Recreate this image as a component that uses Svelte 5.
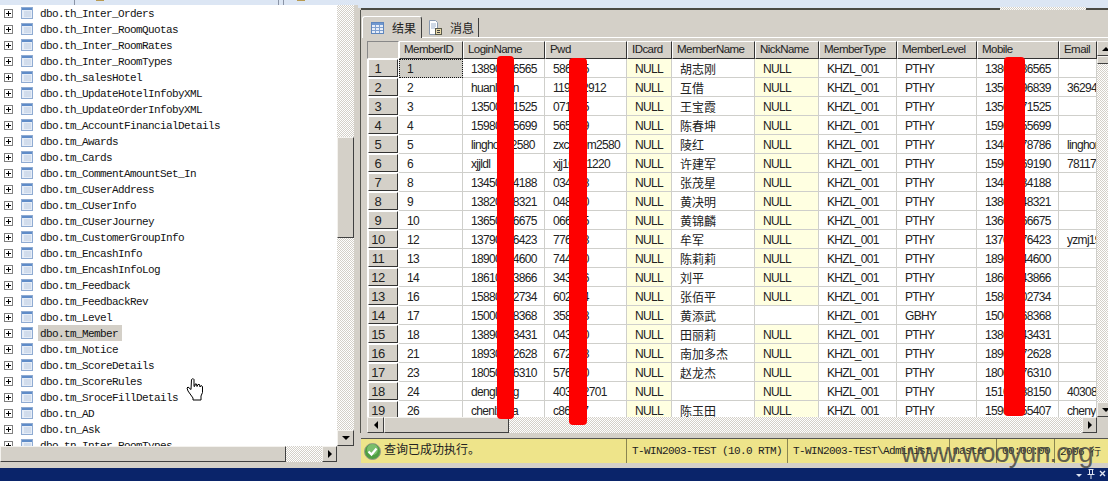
<script>
    const tables = [
        'th_Inter_Orders', 'th_Inter_RoomQuotas', 'th_Inter_RoomRates', 'th_Inter_RoomTypes', 'th_salesHotel',
        'th_UpdateHotelInfobyXML', 'th_UpdateOrderInfobyXML', 'tm_AccountFinancialDetails', 'tm_Awards', 'tm_Cards',
        'tm_CommentAmountSet_In', 'tm_CUserAddress', 'tm_CUserInfo', 'tm_CUserJourney', 'tm_CustomerGroupInfo',
        'tm_EncashInfo', 'tm_EncashInfoLog', 'tm_Feedback', 'tm_FeedbackRev', 'tm_Level', 'tm_Member', 'tm_Notice',
        'tm_ScoreDetails', 'tm_ScoreRules', 'tm_SroceFillDetails', 'tn_AD', 'tn_Ask', 'tn_Inter_RoomTypes'
    ];

    const columns = ['MemberID', 'LoginName', 'Pwd', 'IDcard', 'MemberName', 'NickName', 'MemberType', 'MemberLevel', 'Mobile', 'Email'];

    // the characters under the red bars are filler
    const rows = [
        ['1', '13890006565', '586005', 'NULL', '胡志刚', 'NULL', 'KHZL_001', 'PTHY', '13800086565', ''],
        ['2', 'huanlxxxn', '119002912', 'NULL', '互借', 'NULL', 'KHZL_001', 'PTHY', '13500096839', '36294'],
        ['3', '13500001525', '071005', 'NULL', '王宝霞', 'NULL', 'KHZL_001', 'PTHY', '13500071525', ''],
        ['4', '15980005699', '565009', 'NULL', '陈春坤', 'NULL', 'KHZL_001', 'PTHY', '15900055699', ''],
        ['5', 'lingho002580', 'zxc000m2580', 'NULL', '陵红', 'NULL', 'KHZL_001', 'PTHY', '13400078786', 'linghor'],
        ['6', 'xjjldl', 'xjj10001220', 'NULL', '许建军', 'NULL', 'KHZL_001', 'PTHY', '15900069190', '78117'],
        ['8', '13450004188', '034008', 'NULL', '张茂星', 'NULL', 'KHZL_001', 'PTHY', '13400034188', ''],
        ['9', '13820008321', '048000', 'NULL', '黄决明', 'NULL', 'KHZL_001', 'PTHY', '13800048321', ''],
        ['10', '13650006675', '066005', 'NULL', '黄锦麟', 'NULL', 'KHZL_001', 'PTHY', '13600066675', ''],
        ['12', '13790006423', '776008', 'NULL', '牟军', 'NULL', 'KHZL_001', 'PTHY', '13700076423', 'yzmj19'],
        ['13', '18900004600', '744000', 'NULL', '陈莉莉', 'NULL', 'KHZL_001', 'PTHY', '18900044600', ''],
        ['14', '18610003866', '343006', 'NULL', '刘平', 'NULL', 'KHZL_001', 'PTHY', '18600043866', ''],
        ['16', '15880002734', '602004', 'NULL', '张佰平', 'NULL', 'KHZL_001', 'PTHY', '15800002734', ''],
        ['17', '15000008368', '358008', 'NULL', '黄添武', '', 'KHZL_001', 'GBHY', '15000068368', ''],
        ['18', '13890003431', '043000', 'NULL', '田丽莉', 'NULL', 'KHZL_001', 'PTHY', '13800043431', ''],
        ['21', '18930002628', '672008', 'NULL', '南加多杰', 'NULL', 'KHZL_001', 'PTHY', '18900072628', ''],
        ['23', '18050006310', '576000', 'NULL', '赵龙杰', 'NULL', 'KHZL_001', 'PTHY', '18000076310', ''],
        ['24', 'denglxxxg', '403002701', 'NULL', '', 'NULL', 'KHZL_001', 'PTHY', '15100038150', '40308'],
        ['26', 'chenlxxxa', 'c86007', 'NULL', '陈玉田', 'NULL', 'KHZL_001', 'PTHY', '15900055407', 'chenyu']
    ];
</script>

<div class="app">
    <div class="top-strip">
        <i class="tick t1"></i><i class="brown"></i><i class="tick t2"></i><i class="tick t3"></i><i class="brown b2"></i>
    </div>

    <div class="main">
        <div class="tree-pane">
            <div class="tree-area">
                <div class="tree">
                    {#each tables as name}
                        <div class="tree-row">
                            <svg class="plus" width="9" height="9" viewBox="0 0 9 9">
                                <rect x=".5" y=".5" width="8" height="8" fill="#fff" stroke="#7f7f7f" />
                                <path d="M2 4.5h5M4.5 2v5" stroke="#000" />
                            </svg>
                            <svg class="table-icon" width="12" height="12" viewBox="0 0 12 12">
                                <rect x=".5" y=".5" width="11" height="11" fill="#e6edf7" stroke="#8fabd2" />
                                <rect x="1" y="1" width="10" height="2" fill="#5f8cc8" />
                                <path d="M3 5h7M3 7h7M3 9h7" stroke="#bccce2" />
                                <path d="M5.5 4v6" stroke="#cfdbeb" />
                            </svg>
                            <span class="tree-name" class:selected={name === 'tm_Member'}>dbo.{name}</span>
                        </div>
                    {/each}
                </div>
                <div class="vscroll">
                    <div class="hatch tree-track-a"></div>
                    <div class="thumb tree-vthumb"></div>
                    <div class="hatch grow"></div>
                    <div class="sbtn tree-vbtn"><i class="arrow a-down"></i></div>
                </div>
            </div>
            <div class="hscroll-row">
                <div class="thumb tree-hthumb"></div>
                <div class="hatch grow"></div>
                <div class="sbtn tree-hbtn"><i class="arrow a-right"></i></div>
            </div>
        </div>

        <div class="results-pane">
            <div class="frame-top"><div class="frame-line"></div><div class="hatch frame-hatch"></div><div class="frame-line short"></div></div>
            <div class="results">
                <div class="tabs">
                    <div class="tab active">
                        <svg width="13" height="12" viewBox="0 0 13 12">
                            <rect x=".5" y=".5" width="12" height="11" fill="#e6edf8" stroke="#5f86bd" />
                            <rect x="1" y="1" width="11" height="2" fill="#6f97cf" />
                            <path d="M1 5.5h11M1 8.5h11M4.5 3v8M8.5 3v8" stroke="#7fa0cf" />
                        </svg>
                        <span>结果</span>
                    </div>
                    <div class="tab">
                        <svg width="15" height="17" viewBox="0 0 15 17">
                            <path d="M1.5 1.5h6l2 2v12h-8z" fill="#fff" stroke="#8a9ab0" />
                            <path d="M3 5h5M3 7h5M3 9h4" stroke="#9fb2cc" />
                            <rect x="7.5" y="9.5" width="6" height="6" fill="#e8d9a8" stroke="#5a5a4a" />
                            <path d="M9 11.5h3M9 13.5h3" stroke="#444" />
                        </svg>
                        <span>消息</span>
                    </div>
                </div>

                <div class="grid-wrap">
                    <div class="grid-col">
                        <div class="grid">
                            <div class="head corner"></div>
                            {#each columns as col}
                                <div class="head">{col}</div>
                            {/each}
                            {#each rows as row, r}
                                <div class="rowhead"><span class="rowbtn">{r + 1}</span></div>
                                {#each row as val, c}
                                    <div
                                        class="cell"
                                        class:nul={val === 'NULL'}
                                        class:cjk={c === 4}
                                        class:focus={r === 0 && c === 0}
                                    >{val}</div>
                                {/each}
                            {/each}
                        </div>
                        <div class="hscroll-row grid-h">
                            <div class="sbtn grid-hstart"><i class="arrow a-left"></i></div>
                            <div class="thumb grid-hthumb"></div>
                            <div class="hatch grow"></div>
                            <div class="sbtn grid-hbtn"><i class="arrow a-right"></i></div>
                        </div>
                    </div>
                    <div class="grid-v">
                        <div class="sbtn grid-vbtn"><i class="arrow a-up"></i></div>
                        <div class="thumb grid-vthumb"></div>
                        <div class="hatch grow"></div>
                        <div class="sbtn grid-vbtn"><i class="arrow a-down"></i></div>
                        <div class="grid-corner"></div>
                    </div>
                </div>
            </div>

            <div class="status">
                <div class="st msg">
                    <svg width="17" height="17" viewBox="0 0 17 17">
                        <circle cx="8.5" cy="8.5" r="8" fill="#4f9f42" stroke="#9a9a8a" />
                        <circle cx="8.5" cy="6.5" r="5.5" fill="#9ad48a" opacity=".6" />
                        <path d="M4.5 8.5l3 3 5-6" fill="none" stroke="#fff" stroke-width="2.2" />
                    </svg>
                    <span class="msg-text">查询已成功执行。</span>
                </div>
                <div class="st server">T-WIN2003-TEST (10.0 RTM)</div>
                <div class="st user">T-WIN2003-TEST\Administ...</div>
                <div class="st db">master</div>
                <div class="st time">00:00:00</div>
                <div class="st count">2006 行</div>
            </div>
        </div>
    </div>

    <div class="taskbar">
        <svg width="34" height="13" viewBox="0 0 34 13">
            <path d="M2 6h6l-3 3z" fill="#dfe4f2" />
            <path d="M14.5 1.5h5M15.5 1.5v5M18.5 1.5v5M13.5 6.5h7M17 7v4" stroke="#dfe4f2" fill="none" />
            <path d="M26 3l5 5M31 3l-5 5" stroke="#dfe4f2" stroke-width="1.4" />
        </svg>
    </div>

    <!-- overlays painted on the screenshot -->
    <i class="bar bar-login"></i>
    <i class="bar bar-pwd"></i>
    <i class="bar bar-mobile"></i>
    <div class="watermark">www.wooyun.org</div>
    <svg class="hand" width="18" height="23" viewBox="0 0 18 23">
        <path d="M5.5 1.5c1-1 2-1 2.5 0v7l1-.5v-2h1.5l.5 2.5 1-2h1.5l.5 2.5 1-1.5 1.5 1v6l-1.5 3.5v4h-8v-2L2 13l-1-3 1-1 3 2.5z" fill="#fff" stroke="#000" stroke-linejoin="round" />
    </svg>
</div>

<style>
    :global(body) {
        margin: 0;
    }

    .app {
        position: relative;
        width: 1108px;
        height: 481px;
        overflow: hidden;
        display: flex;
        flex-direction: column;
        background: #d4d0c8;
        font-family: "Liberation Sans", sans-serif;
        font-size: 12px;
        color: #222;
    }

    .top-strip {
        height: 5px;
        flex: none;
        background: #dce6f4;
        display: flex;
    }

    .top-strip i {
        display: block;
        flex: none;
    }

    .tick {
        width: 1px;
        height: 5px;
        background: #8a94a6;
    }

    .t1 { margin-left: 74px; }
    .t2 { margin-left: 174px; }
    .t3 { margin-left: 4px; }

    .brown {
        width: 8px;
        height: 1px;
        margin-left: 21px;
        background: #b89a50;
    }

    .b2 { margin-left: 13px; }

    .main {
        flex: 1;
        display: flex;
        min-height: 0;
    }

    .tree-pane {
        width: 358px;
        flex: none;
        display: flex;
        flex-direction: column;
    }

    .tree-area {
        height: 441px;
        display: flex;
    }

    .tree {
        width: 337px;
        flex: none;
        overflow: hidden;
        background: #fff;
    }

    .tree-row {
        height: 16px;
        display: flex;
        align-items: center;
        font-family: "Liberation Mono", monospace;
        font-size: 11px;
        letter-spacing: -0.6px;
        color: #111;
        white-space: nowrap;
    }

    .plus {
        margin-left: 4px;
        flex: none;
    }

    .table-icon {
        margin-left: 8px;
        flex: none;
    }

    .tree-name {
        margin-left: 5px;
        padding: 0 4px 0 2px;
        height: 16px;
        line-height: 18px;
    }

    .selected {
        background: #d4d0c8;
    }

    .vscroll {
        width: 17px;
        flex: none;
        display: flex;
        flex-direction: column;
    }

    .hatch {
        background: repeating-conic-gradient(#d4d0c8 0 25%, #fff 0 50%) 0 0 / 2px 2px;
    }

    .grow {
        flex: 1;
        min-width: 0;
        min-height: 0;
    }

    .tree-track-a {
        height: 132px;
    }

    .thumb, .sbtn {
        box-sizing: border-box;
        background: #d4d0c8;
        border: 1px solid;
        border-color: #f4f2ee #404040 #404040 #f4f2ee;
        flex: none;
    }

    .sbtn {
        display: flex;
        align-items: center;
        justify-content: center;
    }

    .tree-vthumb { height: 101px; }
    .tree-vbtn { height: 16px; }

    .arrow {
        display: block;
        width: 0;
        height: 0;
        border: 4px solid transparent;
    }

    .a-down { border-top-color: #000; border-bottom: 0; }
    .a-up { border-bottom-color: #000; border-top: 0; }
    .a-right { border-left-color: #000; border-right: 0; }
    .a-left { border-right-color: #000; border-left: 0; }

    .hscroll-row {
        height: 16px;
        width: 337px;
        display: flex;
        flex: none;
    }

    .tree-hthumb { width: 286px; }
    .tree-hbtn { width: 15px; }

    .results-pane {
        flex: 1;
        min-width: 0;
        display: flex;
        flex-direction: column;
    }

    .frame-top {
        height: 5px;
        flex: none;
        display: flex;
        background: linear-gradient(#dce6f4 0 3px, transparent 3px);
    }

    .frame-line {
        flex: 1;
        margin-left: 3px;
        height: 2px;
        margin-top: 3px;
        background: #4a4a44;
    }

    .frame-line.short {
        flex: none;
        width: 22px;
        margin-left: 0;
    }

    .frame-hatch {
        width: 86px;
        height: 3px;
        margin-top: 2px;
        flex: none;
    }

    .results {
        flex: none;
        margin-left: 2px;
        border-left: 1px solid #55554f;
        padding-left: 6px;
        display: flex;
        flex-direction: column;
    }

    .tabs {
        height: 24px;
        margin: 4px 0 0 -5px;
        display: flex;
        align-items: flex-end;
        border-bottom: 1px solid #fff;
        flex: none;
        box-sizing: border-box;
    }

    .tab {
        display: flex;
        align-items: center;
        flex: none;
        height: 19px;
        border-right: 1px solid #404040;
        font-family: "Noto Sans CJK SC", sans-serif;
        font-size: 12px;
        white-space: nowrap;
        box-sizing: border-box;
    }

    .tab + .tab {
        gap: 7px;
        padding-left: 5px;
        width: 56px;
        margin-left: 1px;
    }

    .tab.active {
        gap: 8px;
        padding-left: 8px;
        width: 60px;
        height: 22px;
        background: #d4d0c8;
        border-top: 1px solid #fff;
        border-left: 1px solid #fff;
        border-radius: 3px 3px 0 0;
        position: relative;
        top: 1px;
    }

    .grid-wrap {
        height: 392px;
        margin-top: 3px;
        display: flex;
    }

    .grid-col {
        width: 730px;
        flex: none;
        display: flex;
        flex-direction: column;
    }

    .grid {
        height: 376px;
        overflow: hidden;
        background: #fff;
        display: grid;
        grid-template-columns: 32px 64px 82px 82px 45px 83px 64px 78px 80px 82px 38px;
        grid-auto-rows: 19px;
        grid-template-rows: 18px;
    }

    .head {
        box-sizing: border-box;
        background: #d4d0c8;
        border: 1px solid;
        border-color: #fff #333 #333 #fff;
        padding-left: 4px;
        line-height: 15px;
        font-size: 11.5px;
        letter-spacing: -0.55px;
        overflow: hidden;
        white-space: nowrap;
    }

    .corner {
        border-color: #888 #fff #fff #888;
        padding: 0;
    }

    .rowhead {
        background: #fff;
    }

    .rowbtn {
        display: block;
        box-sizing: border-box;
        margin-left: 1px;
        height: 18px;
        width: 30px;
        background: #d4d0c8;
        border: 1px solid;
        border-color: #fff #333 #333 #fff;
        padding-right: 10px;
        line-height: 18px;
        font-size: 13px;
        text-align: center;
        letter-spacing: -0.4px;
    }

    .cell {
        box-sizing: border-box;
        border-right: 1px solid #cfcfcb;
        border-bottom: 1px solid #cfcfcb;
        padding-left: 8px;
        line-height: 20px;
        letter-spacing: -0.7px;
        white-space: nowrap;
        overflow: hidden;
    }

    .nul {
        background: #ffffe1;
    }

    .cjk {
        font-family: "Noto Sans CJK SC", sans-serif;
        letter-spacing: 0;
        line-height: 19px;
    }

    .focus {
        background: #cfcdc6;
        outline: 1px dotted #111;
        outline-offset: -1px;
    }

    .grid-h {
        width: 730px;
        height: 16px;
    }

    .grid-hstart {
        width: 17px;
    }

    .grid-hbtn {
        width: 15px;
    }

    .grid-hthumb {
        width: 125px;
    }

    .grid-v {
        width: 11px;
        flex: none;
        display: flex;
        flex-direction: column;
        overflow: hidden;
    }

    .grid-vbtn {
        height: 15px;
        width: 17px;
    }

    .grid-vthumb {
        height: 8px;
        width: 17px;
    }

    .grid-corner {
        height: 16px;
        flex: none;
    }

    .status {
        height: 25px;
        flex: none;
        margin: 5px 0 5px 3px;
        box-sizing: border-box;
        border-top: 1px solid #55554f;
        background: #eee48a;
        display: flex;
        font-family: "Liberation Mono", monospace;
        font-size: 11px;
        letter-spacing: -0.6px;
        color: #222;
    }

    .st {
        display: flex;
        align-items: center;
        flex: none;
        box-sizing: border-box;
        border-right: 1px solid #8a8550;
        padding-left: 5px;
        white-space: nowrap;
        overflow: hidden;
    }

    .msg {
        width: 266px;
        padding-left: 3px;
        gap: 3px;
    }

    .msg-text {
        font-family: "Noto Sans CJK SC", sans-serif;
        font-size: 12px;
        letter-spacing: 0;
        margin-top: -6px;
    }

    .server { width: 161px; }
    .user { width: 162px; }
    .db { width: 47px; padding-left: 3px; }
    .time { width: 58px; }
    .count { flex: 1; border-right: 0; }

    .taskbar {
        height: 13px;
        flex: none;
        background: #0a246a;
        display: flex;
        justify-content: flex-end;
    }

    .bar {
        position: absolute;
        display: block;
        background: #fe0000;
        border-radius: 4px;
    }

    .bar-login { left: 497px; top: 56px; width: 17px; height: 363px; }
    .bar-pwd { left: 569px; top: 58px; width: 18px; height: 367px; }
    .bar-mobile { left: 1004px; top: 57px; width: 21px; height: 359px; }

    .watermark {
        position: absolute;
        left: 901px;
        top: 438px;
        font-size: 27px;
        letter-spacing: -0.9px;
        color: #4a4a44;
        opacity: .85;
        white-space: nowrap;
    }

    .hand {
        position: absolute;
        left: 186px;
        top: 378px;
    }
</style>
